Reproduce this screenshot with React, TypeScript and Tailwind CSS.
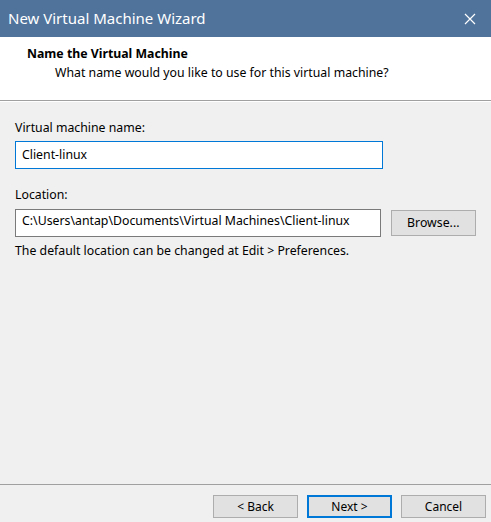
import React from 'react';

const font = { fontFamily: '"Segoe UI", "Noto Sans", "Open Sans", sans-serif' };

function DialogButton({ label, primary }: { label: string; primary?: boolean }) {
  return (
    <button
      className={
        'w-[85px] h-[23px] bg-[#e1e1e1] text-[12px] text-black flex items-center justify-center ' +
        (primary ? 'border-2 border-[#0078d7]' : 'border border-[#adadad]')
      }
    >
      {label}
    </button>
  );
}

export default function App() {
  return (
    <div className="w-[491px] h-[522px] flex flex-col bg-[#f0f0f0] text-black text-[12.3px]" style={font}>
      {/* title bar */}
      <div className="h-[37px] bg-[#4f739b] flex items-center justify-between pl-[8px] pr-[10px] shrink-0">
        <span className="text-white text-[15px] leading-none">New Virtual Machine Wizard</span>
        <svg width="12" height="12" viewBox="0 0 12 12" className="mr-[5px]">
          <path d="M1 1 L11 11 M11 1 L1 11" stroke="white" strokeWidth="1.2" fill="none" />
        </svg>
      </div>

      {/* header */}
      <div className="h-[64px] bg-white border-b border-[#a0a0a0] shrink-0 pt-[9px] pl-[27px]">
        <div className="font-bold leading-[16px]">Name the Virtual Machine</div>
        <div className="leading-[16px] mt-[3px] pl-[28px]">
          What name would you like to use for this virtual machine?
        </div>
      </div>
      <div className="h-px bg-white shrink-0" />

      {/* body */}
      <div className="flex-1 px-[15px] pt-[18px]">
        <div className="leading-[16px]">Virtual machine name:</div>
        <div className="mt-[5px] w-[368px] h-[28px] border border-[#0078d7] bg-white flex items-center px-[6px]">
          Client-linux
        </div>

        <div className="mt-[18px] leading-[16px]">Location:</div>
        <div className="mt-[6px] flex items-center gap-[10px]">
          <div className="w-[368px] h-[28px] border border-[#7a7a7a] bg-white flex items-center px-[6px] pb-[3px]">
            C:\Users\antap\Documents\Virtual Machines\Client-linux
          </div>
          <button className="w-[86px] h-[26px] bg-[#e1e1e1] border border-[#adadad] flex items-center justify-center">
            Browse...
          </button>
        </div>
        <div className="mt-[6px] leading-[16px]">
          The default location can be changed at Edit &gt; Preferences.
        </div>
      </div>

      {/* footer */}
      <div className="h-[38px] border-t border-[#a0a0a0] shrink-0 flex items-start justify-end gap-[9px] pr-[5px] pt-[10px]">
        <DialogButton label="< Back" />
        <DialogButton label="Next >" primary />
        <DialogButton label="Cancel" />
      </div>
    </div>
  );
}
